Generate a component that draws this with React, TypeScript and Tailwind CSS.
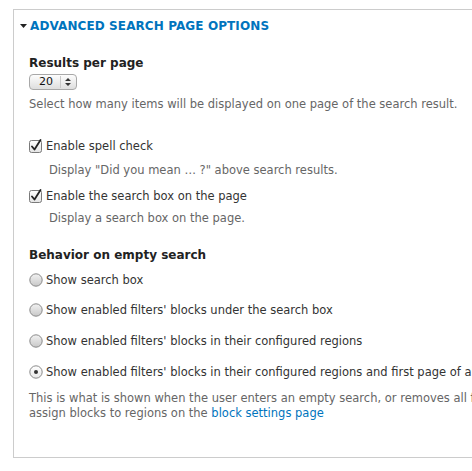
import React from "react";

const font = { fontFamily: '"DejaVu Sans", Verdana, sans-serif' };

function Checkbox() {
  return (
    <svg width="14" height="14" viewBox="0 0 14 14" className="shrink-0">
      <defs>
        <linearGradient id="cbg" x1="0" y1="0" x2="0" y2="1">
          <stop offset="0" stopColor="#ffffff" />
          <stop offset="1" stopColor="#e4e4e4" />
        </linearGradient>
      </defs>
      <rect x="0.5" y="1.5" width="12" height="12" rx="2" fill="url(#cbg)" stroke="#7a7a7a" />
      <path d="M3 7.5 L5.5 10.5 L11.5 1" fill="none" stroke="#222" strokeWidth="1.8" strokeLinecap="round" strokeLinejoin="round" />
    </svg>
  );
}

function Radio({ checked }: { checked?: boolean }) {
  return (
    <svg width="14" height="14" viewBox="0 0 14 14" className="shrink-0">
      <defs>
        <linearGradient id={checked ? "rg1" : "rg0"} x1="0" y1="0" x2="0" y2="1">
          <stop offset="0" stopColor={checked ? "#ffffff" : "#f2f2f2"} />
          <stop offset="1" stopColor={checked ? "#e8e8e8" : "#c8c8c8"} />
        </linearGradient>
      </defs>
      <circle cx="7" cy="7" r="6.2" fill={`url(#${checked ? "rg1" : "rg0"})`} stroke="#8a8a8a" />
      {checked && <circle cx="7" cy="7" r="2" fill="#333" />}
    </svg>
  );
}

export default function App() {
  return (
    <div className="w-[472px] h-[471px] overflow-hidden bg-white" style={font}>
      <div className="pt-[9px] pl-[13px]">
        <div className="w-[520px] h-[449px] border border-r-0 border-[#cccccc] relative">
          <div className="flex items-center h-[30px] mt-[1px] pl-[6px]">
            <svg width="8" height="6" viewBox="0 0 8 6" className="mr-[2px]">
              <path d="M0 1 L7 1 L3.5 5 Z" fill="#222" />
            </svg>
            <span className="text-[12px] font-bold text-[#0074bd] tracking-[0.1px]">ADVANCED SEARCH PAGE OPTIONS</span>
          </div>
          <div className="pl-[15px] text-[11.5px] text-[#333]">
            <div className="mt-[14px] text-[12px] font-bold text-[#222] leading-[16px]">Results per page</div>
            <div className="mt-[3px] w-[48px] h-[16px] rounded-[4px] border border-[#a8a8a8] bg-gradient-to-b from-[#fdfdfd] to-[#dedede] flex items-center text-[11px] text-[#111]">
              <span className="pl-[9px] w-[30px]">20</span>
              <span className="w-px h-[12px] bg-[#c8c8c8]" />
              <svg width="8" height="10" viewBox="0 0 8 10" className="ml-[3px]">
                <path d="M1 4 L4 1 L7 4 Z M1 6 L4 9 L7 6 Z" fill="#333" />
              </svg>
            </div>
            <div className="mt-[6px] text-[#666] leading-[16px] whitespace-nowrap">Select how many items will be displayed on one page of the search result.</div>

            <div className="mt-[26px] flex items-center gap-[3px] leading-[16px] whitespace-nowrap">
              <Checkbox />
              <span>Enable spell check</span>
            </div>
            <div className="mt-[8px] pl-[20px] text-[#666] leading-[16px] whitespace-nowrap">Display "Did you mean … ?" above search results.</div>
            <div className="mt-[10px] flex items-center gap-[3px] leading-[16px] whitespace-nowrap">
              <Checkbox />
              <span>Enable the search box on the page</span>
            </div>
            <div className="mt-[6px] pl-[20px] text-[#666] leading-[16px] whitespace-nowrap">Display a search box on the page.</div>

            <div className="mt-[21px] text-[12px] font-bold text-[#222] leading-[16px]">Behavior on empty search</div>
            <div className="mt-[9px] flex items-center gap-[3px] leading-[16px] whitespace-nowrap">
              <Radio />
              <span>Show search box</span>
            </div>
            <div className="mt-[14px] flex items-center gap-[3px] leading-[16px] whitespace-nowrap">
              <Radio />
              <span>Show enabled filters' blocks under the search box</span>
            </div>
            <div className="mt-[15px] flex items-center gap-[3px] leading-[16px] whitespace-nowrap">
              <Radio />
              <span>Show enabled filters' blocks in their configured regions</span>
            </div>
            <div className="mt-[15px] flex items-center gap-[3px] leading-[16px] whitespace-nowrap">
              <Radio checked />
              <span>Show enabled filters' blocks in their configured regions and first page of all search results</span>
            </div>
            <div className="mt-[11px] text-[#666] leading-[15px] whitespace-nowrap">
              <div>This is what is shown when the user enters an empty search, or removes all filters. You can</div>
              <div>
                assign blocks to regions on the <span className="text-[#0074bd]">block settings page</span>
              </div>
            </div>
          </div>
        </div>
      </div>
    </div>
  );
}
